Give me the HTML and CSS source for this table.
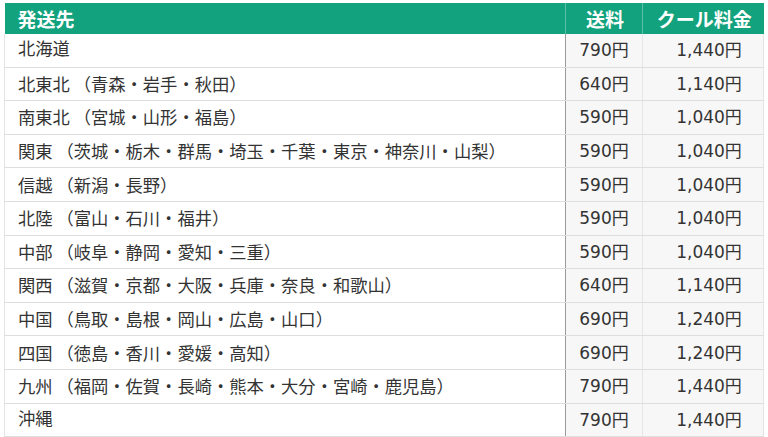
FILE: index.html
```html
<!DOCTYPE html>
<html lang="ja">
<head>
<meta charset="utf-8">
<link rel="stylesheet" href="styles.css">
</head>
<body>
<table class="rates">
  <colgroup>
    <col class="c-dest">
    <col class="c-fee">
    <col class="c-cool">
  </colgroup>
  <thead>
    <tr><th class="dest">発送先</th><th class="fee">送料</th><th class="cool">クール料金</th></tr>
  </thead>
  <tbody>
    <tr class="first"><td class="dest">北海道</td><td class="fee">790円</td><td class="cool">1,440円</td></tr>
    <tr><td class="dest">北東北 （青森・岩手・秋田）</td><td class="fee">640円</td><td class="cool">1,140円</td></tr>
    <tr><td class="dest">南東北 （宮城・山形・福島）</td><td class="fee">590円</td><td class="cool">1,040円</td></tr>
    <tr><td class="dest">関東 （茨城・栃木・群馬・埼玉・千葉・東京・神奈川・山梨）</td><td class="fee">590円</td><td class="cool">1,040円</td></tr>
    <tr><td class="dest">信越 （新潟・長野）</td><td class="fee">590円</td><td class="cool">1,040円</td></tr>
    <tr><td class="dest">北陸 （富山・石川・福井）</td><td class="fee">590円</td><td class="cool">1,040円</td></tr>
    <tr><td class="dest">中部 （岐阜・静岡・愛知・三重）</td><td class="fee">590円</td><td class="cool">1,040円</td></tr>
    <tr><td class="dest">関西 （滋賀・京都・大阪・兵庫・奈良・和歌山）</td><td class="fee">640円</td><td class="cool">1,140円</td></tr>
    <tr><td class="dest">中国 （鳥取・島根・岡山・広島・山口）</td><td class="fee">690円</td><td class="cool">1,240円</td></tr>
    <tr><td class="dest">四国 （徳島・香川・愛媛・高知）</td><td class="fee">690円</td><td class="cool">1,240円</td></tr>
    <tr><td class="dest">九州 （福岡・佐賀・長崎・熊本・大分・宮崎・鹿児島）</td><td class="fee">790円</td><td class="cool">1,440円</td></tr>
    <tr class="last"><td class="dest">沖縄</td><td class="fee">790円</td><td class="cool">1,440円</td></tr>
  </tbody>
</table>
</body>
</html>
```

FILE: styles.css
```css
html, body {
  margin: 0;
  padding: 0;
  background: #ffffff;
}
body {
  padding: 3px 5px 0 4px;
  font-family: "DejaVu Sans", "Noto Sans CJK JP", sans-serif;
  color: #333333;
}
.rates {
  width: 759px;
  border-collapse: collapse;
  table-layout: fixed;
}
.c-dest { width: 561px; }
.c-fee { width: 77px; }
.c-cool { width: 121px; }

.rates th {
  background: #13a27e;
  color: #ffffff;
  font-family: "Noto Sans CJK JP", sans-serif;
  font-weight: 700;
  font-size: 19px;
  height: 31px;
  padding: 0;
  line-height: 31px;
  border-right: 1px solid #5cc0a4;
}
.rates th.dest { text-align: left; padding-left: 13px; }
.rates th.fee { text-align: center; padding-left: 2px; }
.rates th.cool { text-align: center; padding-left: 2px; border-right: none; }

.rates td {
  height: 32.6px;
  padding: 0;
  font-size: 17px;
  border-bottom: 1px solid #dedede;
  line-height: 20px;
}
.rates td.dest {
  padding-left: 13px;
  font-family: "Noto Sans CJK JP", sans-serif;
  font-size: 17.3px;
  border-left: 1px solid #e4e4e4;
  color: #333;
}
.rates td.fee {
  background: #f7f7f7;
  text-align: center;
  border-left: 1px solid #9a9a9a;
  border-right: 1px solid #e6e6e6;
}
.rates td.cool {
  background: #f7f7f7;
  text-align: center;
  padding-left: 12px;
  border-right: 1px solid #e4e4e4;
}
.rates tr.first td.dest,
.rates tr.last td.dest {
  vertical-align: top;
  padding-top: 4px;
  height: 28.6px;
}
```
